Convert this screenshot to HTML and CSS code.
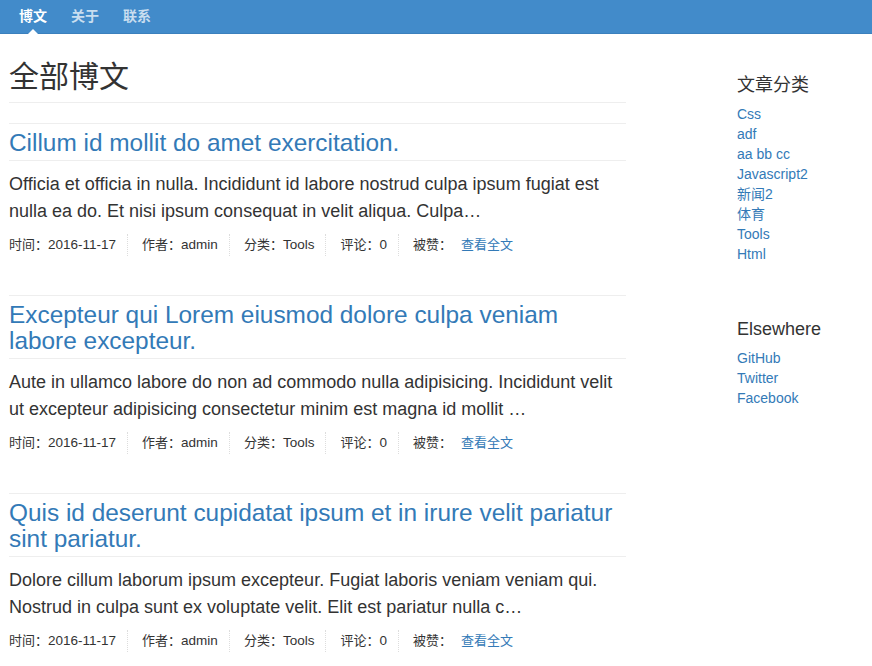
FILE: index.html
```html
<!DOCTYPE html>
<html lang="zh-CN">
<head>
<meta charset="utf-8">
<title>全部博文</title>
<link rel="stylesheet" href="styles.css">
</head>
<body>
<header class="navbar">
  <nav class="nav">
    <a class="nav-link active" href="#">博文</a>
    <a class="nav-link" href="#">关于</a>
    <a class="nav-link" href="#">联系</a>
  </nav>
</header>
<div class="page">
  <main class="main">
    <h1 class="page-title">全部博文</h1>

    <article class="post">
      <h2 class="post-title"><a href="#">Cillum id mollit do amet exercitation.</a></h2>
      <p class="post-excerpt">Officia et officia in nulla. Incididunt id labore nostrud culpa ipsum fugiat est nulla ea do. Et nisi ipsum consequat in velit aliqua. Culpa…</p>
      <div class="post-meta">
        <span class="meta-item"><span class="meta-label">时间：</span>2016-11-17</span>
        <span class="meta-item"><span class="meta-label">作者：</span>admin</span>
        <span class="meta-item"><span class="meta-label">分类：</span>Tools</span>
        <span class="meta-item"><span class="meta-label">评论：</span>0</span>
        <span class="meta-item plain"><span class="meta-label">被赞：</span></span>
        <a class="meta-more" href="#">查看全文</a>
      </div>
    </article>

    <article class="post">
      <h2 class="post-title"><a href="#">Excepteur qui Lorem eiusmod dolore culpa veniam labore excepteur.</a></h2>
      <p class="post-excerpt">Aute in ullamco labore do non ad commodo nulla adipisicing. Incididunt velit ut excepteur adipisicing consectetur minim est magna id mollit …</p>
      <div class="post-meta">
        <span class="meta-item"><span class="meta-label">时间：</span>2016-11-17</span>
        <span class="meta-item"><span class="meta-label">作者：</span>admin</span>
        <span class="meta-item"><span class="meta-label">分类：</span>Tools</span>
        <span class="meta-item"><span class="meta-label">评论：</span>0</span>
        <span class="meta-item plain"><span class="meta-label">被赞：</span></span>
        <a class="meta-more" href="#">查看全文</a>
      </div>
    </article>

    <article class="post">
      <h2 class="post-title"><a href="#">Quis id deserunt cupidatat ipsum et in irure velit pariatur sint pariatur.</a></h2>
      <p class="post-excerpt">Dolore cillum laborum ipsum excepteur. Fugiat laboris veniam veniam qui. Nostrud in culpa sunt ex voluptate velit. Elit est pariatur nulla c…</p>
      <div class="post-meta">
        <span class="meta-item"><span class="meta-label">时间：</span>2016-11-17</span>
        <span class="meta-item"><span class="meta-label">作者：</span>admin</span>
        <span class="meta-item"><span class="meta-label">分类：</span>Tools</span>
        <span class="meta-item"><span class="meta-label">评论：</span>0</span>
        <span class="meta-item plain"><span class="meta-label">被赞：</span></span>
        <a class="meta-more" href="#">查看全文</a>
      </div>
    </article>
  </main>

  <aside class="sidebar">
    <section class="widget">
      <h3 class="widget-title">文章分类</h3>
      <ul class="widget-list">
        <li><a href="#">Css</a></li>
        <li><a href="#">adf</a></li>
        <li><a href="#">aa bb cc</a></li>
        <li><a href="#">Javascript2</a></li>
        <li><a href="#">新闻2</a></li>
        <li><a href="#">体育</a></li>
        <li><a href="#">Tools</a></li>
        <li><a href="#">Html</a></li>
      </ul>
    </section>
    <section class="widget">
      <h3 class="widget-title">Elsewhere</h3>
      <ul class="widget-list">
        <li><a href="#">GitHub</a></li>
        <li><a href="#">Twitter</a></li>
        <li><a href="#">Facebook</a></li>
      </ul>
    </section>
  </aside>
</div>
</body>
</html>
```

FILE: styles.css
```css
* { box-sizing: border-box; }

html, body {
  margin: 0;
  padding: 0;
  background: #fff;
}

body {
  font-family: "Liberation Sans", "Noto Sans CJK SC", Arial, sans-serif;
  color: #333;
  font-size: 14px;
}

a { color: #337ab7; text-decoration: none; }

.navbar {
  height: 34px;
  background: #428bca;
  border-bottom: 1px solid #3b80bd;
}

.nav {
  display: flex;
  height: 100%;
  padding-left: 7px;
}

.nav-link {
  position: relative;
  display: flex;
  align-items: center;
  height: 100%;
  padding: 0 12px 4px;
  font-size: 14px;
  font-weight: bold;
  color: rgba(255, 255, 255, 0.72);
}

.nav-link.active { color: #fff; }

.nav-link.active::after {
  content: "";
  position: absolute;
  left: 50%;
  bottom: -1px;
  margin-left: -5px;
  border-left: 5px solid transparent;
  border-right: 5px solid transparent;
  border-bottom: 5px solid #fff;
}

.page {
  display: grid;
  grid-template-columns: 617px 135px;
  column-gap: 111px;
  padding-left: 9px;
}

.page-title {
  margin: 23px 0 20px;
  padding-bottom: 5px;
  font-size: 30px;
  line-height: 40px;
  font-weight: normal;
  border-bottom: 1px solid #eee;
}

.post {
  border-top: 1px solid #eee;
  margin-bottom: 39px;
}

.post-title {
  margin: 0;
  padding: 6px 0 4px;
  font-size: 24.4px;
  line-height: 26px;
  font-weight: normal;
  border-bottom: 1px solid #eee;
}

.post-excerpt {
  margin: 10px 0 0;
  font-size: 18px;
  line-height: 27px;
}

.post-meta {
  display: flex;
  align-items: center;
  margin-top: 9px;
  font-size: 13.5px;
  line-height: 22px;
}

.meta-label { font-size: 13px; }

.meta-more { font-size: 13px; }

.meta-item {
  padding: 0 11px 0 14px;
  border-right: 1px dotted #ddd;
}

.meta-item:first-child { padding-left: 0; }

.meta-item.plain {
  border-right: none;
  padding-right: 9px;
}

.widget { margin-bottom: 53px; }

.widget-title {
  margin: 39px 0 7px;
  font-size: 18px;
  line-height: 24px;
  font-weight: normal;
}

.widget + .widget .widget-title { margin-top: 0; }

.widget-list {
  list-style: none;
  margin: 0;
  padding: 0;
  font-size: 14px;
  line-height: 20px;
}
```
